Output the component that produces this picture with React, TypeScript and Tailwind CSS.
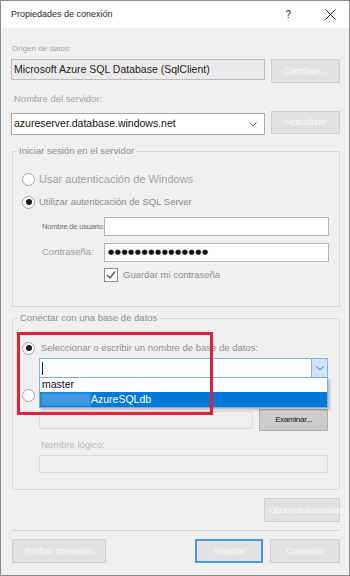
import React from "react";

function Radio({ checked }: { checked?: boolean }) {
  return (
    <span className="flex h-[13px] w-[13px] shrink-0 items-center justify-center rounded-full border border-[#a3a3a3] bg-white">
      {checked && <span className="h-[6px] w-[6px] rounded-full bg-[#1e1e1e]" />}
    </span>
  );
}

function Chevron() {
  return (
    <svg width="8" height="5" viewBox="0 0 8 5" className="shrink-0">
      <polyline points="0.5,0.5 4,4 7.5,0.5" fill="none" stroke="#6b6b6b" strokeWidth="1" />
    </svg>
  );
}

function OffButton({ label, className = "" }: { label: string; className?: string }) {
  return (
    <div
      className={`flex shrink-0 items-center justify-center whitespace-nowrap border border-[#cfcfcf] bg-[#e2e2e2] text-[9.5px] text-[#f8f8f8] ${className}`}
    >
      {label}
    </div>
  );
}

export default function App() {
  return (
    <div className="relative flex h-[576px] w-[350px] flex-col border border-[#8c8c8c] bg-[#f0f0f0] font-['Liberation_Sans',Arial,sans-serif]">
      {/* title bar */}
      <div className="flex h-[27px] shrink-0 items-center bg-white pl-[10px] pr-[13px]">
        <span className="text-[9px] text-[#2a2a2a]">Propiedades de conexión</span>
        <span className="ml-auto text-[10px] text-[#222]">?</span>
        <svg width="11" height="11" viewBox="0 0 11 11" className="ml-[34px]">
          <line x1="0.5" y1="0.5" x2="10.5" y2="10.5" stroke="#222" strokeWidth="1" />
          <line x1="10.5" y1="0.5" x2="0.5" y2="10.5" stroke="#222" strokeWidth="1" />
        </svg>
      </div>

      <div className="flex flex-1 flex-col pl-[10px] pr-[9px]">
        <div className="mt-[16px] pl-[1px] text-[8px] leading-[10px] text-[#a8a8a8]">Origen de datos:</div>
        <div className="mt-[5px] flex items-start justify-between">
          <div className="flex h-[21px] w-[254px] items-center border border-[#bababa] bg-[#ebebeb] pl-[2px] text-[10.5px] text-[#1c1c1c]">
            Microsoft Azure SQL Database (SqlClient)
          </div>
          <OffButton label="Cambiar..." className="h-[24px] w-[69px]" />
        </div>

        <div className="mt-[10px] pl-[3px] text-[9.5px] leading-[12px] text-[#a3a3a3]">Nombre del servidor:</div>
        <div className="mt-[6px] flex items-start justify-between">
          <div className="mt-[2px] flex h-[22px] w-[254px] items-center justify-between border border-[#a9a9a9] bg-white pl-[2px] pr-[7px] text-[10.5px] text-[#111]">
            <span>azureserver.database.windows.net</span>
            <Chevron />
          </div>
          <OffButton label="Actualizar" className="h-[23px] w-[69px]" />
        </div>

        <fieldset className="ml-[1px] mt-[10px] border border-[#dadada] pb-[24px]">
          <legend className="ml-[4px] px-[2px] text-[9.5px] leading-[12px] text-[#8e8e8e]">
            Iniciar sesión en el servidor
          </legend>
          <div className="mt-[15px] flex h-[14px] items-center gap-[4px] pl-[9px]">
            <Radio />
            <span className="text-[11px] text-[#a0a0a0]">Usar autenticación de Windows</span>
          </div>
          <div className="mt-[9px] flex h-[14px] items-center gap-[4px] pl-[9px]">
            <Radio checked />
            <span className="text-[9.5px] text-[#8a8a8a]">Utilizar autenticación de SQL Server</span>
          </div>
          <div className="mr-[10px] mt-[8px] flex items-center pl-[29px]">
            <span className="w-[62px] whitespace-nowrap text-[7.5px] tracking-[-0.2px] text-[#6e6e6e]">Nombre de usuario:</span>
            <div className="h-[19px] flex-1 border border-[#b6b6b6] bg-white" />
          </div>
          <div className="mr-[10px] mt-[7px] flex items-center pl-[29px]">
            <span className="w-[62px] text-[9.5px] text-[#9c9c9c]">Contraseña:</span>
            <div className="flex h-[19px] flex-1 items-center border border-[#b6b6b6] bg-white pl-[3px] font-['DejaVu_Sans',sans-serif] text-[7px] leading-none tracking-[0.6px] text-[#111]">
              ●●●●●●●●●●●●●●●
            </div>
          </div>
          <div className="mt-[6px] flex items-center gap-[5px] pl-[91px]">
            <span className="flex h-[14px] w-[14px] items-center justify-center border border-[#8d8d8d] bg-white">
              <svg width="10" height="10" viewBox="0 0 10 10">
                <polyline points="1,5 4,8 9,1.5" fill="none" stroke="#555" strokeWidth="1.4" />
              </svg>
            </span>
            <span className="text-[9.5px] text-[#8c8c8c]">Guardar mi contraseña</span>
          </div>
        </fieldset>

        <fieldset className="ml-[1px] mt-[5px] border border-[#dadada] pb-[16px]">
          <legend className="ml-[5px] px-[2px] text-[9.5px] leading-[12px] text-[#8e8e8e]">
            Conectar con una base de datos
          </legend>
          <div className="mt-[17px] flex h-[14px] items-center gap-[6px] pl-[9px]">
            <Radio checked />
            <span className="text-[9.5px] text-[#8f8f8f]">Seleccionar o escribir un nombre de base de datos:</span>
          </div>
          <div className="relative ml-[26px] mr-[11px] mt-[3px] flex h-[20px] border border-[#7eb4ea] bg-white">
            <div className="flex flex-1 items-center pl-[2px]">
              <span className="h-[13px] w-px bg-[#222]" />
            </div>
            <div className="flex w-[16px] items-center justify-center border-l border-[#7eb4ea] bg-[#cce4f7]">
              <Chevron />
            </div>
            {/* open dropdown list */}
            <div className="absolute left-[-1px] right-[-1px] top-full z-10 flex flex-col border border-[#7eaee0] bg-white shadow-[2px_2px_2px_rgba(0,0,0,0.2)]">
              <div className="flex h-[14px] items-center pl-[2px] text-[10.5px] text-[#111]">master</div>
              <div className="flex h-[15px] items-center bg-[#0078d7]">
                <span className="ml-[1px] h-[13px] w-[50px] bg-[#3f99e3] blur-[1px]" />
                <span className="text-[10.5px] text-white">AzureSQLdb</span>
              </div>
            </div>
          </div>
          {/* second radio, its label hidden under the open list */}
          <div className="mt-[10px] flex h-[14px] items-center pl-[9px]">
            <Radio />
          </div>
          <div className="ml-[26px] mr-[11px] mt-[7px] flex items-center justify-between">
            <div className="h-[18px] w-[214px] border border-[#dcdcdc] bg-[#efefef]" />
            <div className="flex h-[22px] w-[69px] items-center justify-center border border-[#adadad] bg-[#cccccc] text-[8px] tracking-[-0.3px] text-[#111]">
              Examinar...
            </div>
          </div>
          <div className="mt-[8px] pl-[28px] text-[9.5px] leading-[12px] text-[#b8b8b8]">Nombre lógico:</div>
          <div className="ml-[26px] mr-[11px] mt-[4px] h-[18px] border border-[#dcdcdc] bg-[#efefef]" />
        </fieldset>

        <OffButton
          label="Opciones avanzadas..."
          className="mt-[8px] h-[24px] w-[76px] self-end !justify-start pl-[4px] !text-[8.5px] tracking-[-0.3px]"
        />
        <div className="mt-[8px] h-px bg-[#d6d6d6]" />
        <div className="mt-[8px] flex">
          <OffButton label="Probar conexión" className="ml-[1px] h-[24px] w-[94px]" />
          <OffButton label="Aceptar" className="ml-auto h-[24px] w-[68px] !border-2 !border-[#4a98e2]" />
          <OffButton label="Cancelar" className="ml-[7px] h-[24px] w-[70px]" />
        </div>
      </div>

      {/* red annotation */}
      <div className="pointer-events-none absolute left-[16px] top-[331px] z-20 h-[83px] w-[196px] border-[3px] border-[#e41e3b]" />
    </div>
  );
}
